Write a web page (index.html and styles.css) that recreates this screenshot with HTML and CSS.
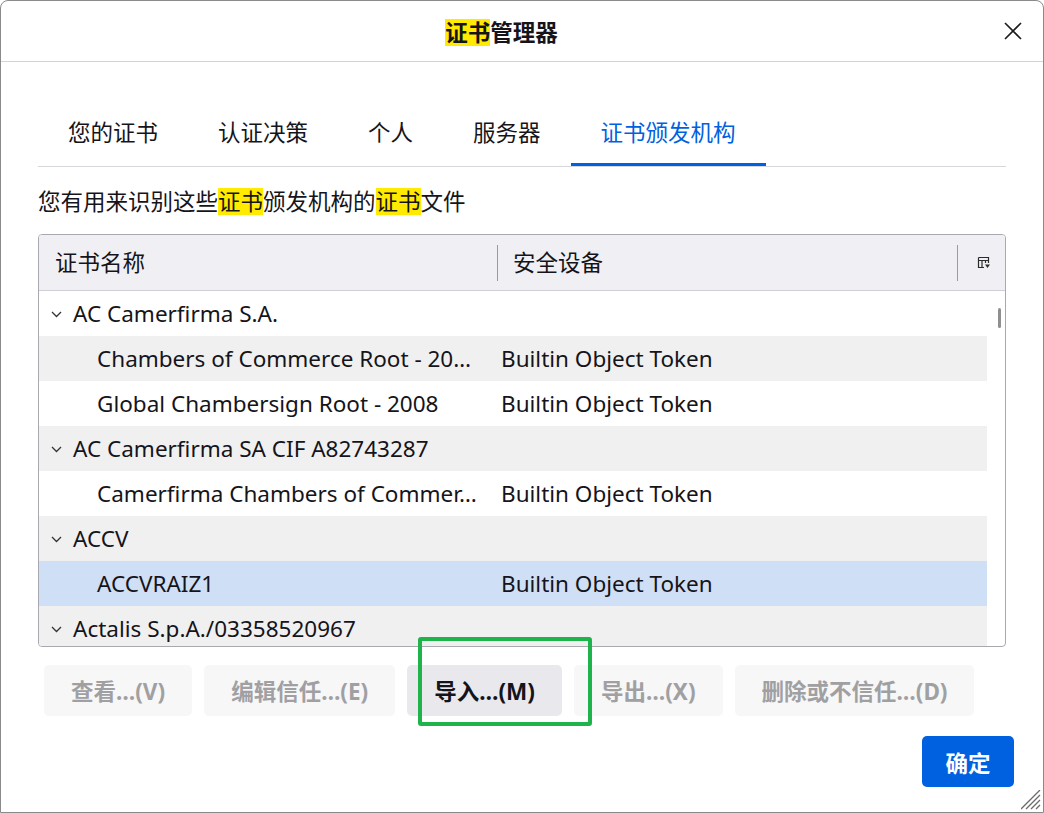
FILE: index.html
```html
<!DOCTYPE html>
<html lang="zh-CN">
<head>
<meta charset="utf-8">
<title>证书管理器</title>
<link rel="stylesheet" href="styles.css">
</head>
<body>
<div class="window">
  <header class="titlebar">
    <h1 class="title"><mark class="hl">证书</mark>管理器</h1>
    <button class="close" aria-label="关闭">
      <svg width="18" height="18" viewBox="0 0 18 18"><path d="M1 1L17 17M17 1L1 17" stroke="#1b1b1b" stroke-width="1.6" fill="none"/></svg>
    </button>
  </header>
  <main class="main">
    <nav class="tabs">
      <span class="tab">您的证书</span>
      <span class="tab">认证决策</span>
      <span class="tab">个人</span>
      <span class="tab">服务器</span>
      <span class="tab active">证书颁发机构</span>
    </nav>
    <p class="desc">您有用来识别这些<mark class="hl">证书</mark>颁发机构的<mark class="hl">证书</mark>文件</p>
    <div class="tree">
      <div class="tree-head">
        <div class="hcell c1">证书名称</div>
        <div class="hsep"></div>
        <div class="hcell c2">安全设备</div>
        <div class="hsep"></div>
        <div class="hcell picker">
          <svg width="13" height="13" viewBox="0 0 13 13"><path d="M1.5 1.5H11.5V7M1.5 1.5V11.5H7M1.5 4.5H11.5M5 4.5V11.5M8.5 4.5V7" stroke="#2b2b2b" stroke-width="1.2" fill="none"/><path d="M8 8.5H13L10.5 12Z" fill="#2b2b2b"/></svg>
        </div>
      </div>
      <div class="tree-body">
        <div class="rows">
          <div class="row group"><span class="name"><svg class="chev" width="11" height="7" viewBox="0 0 11 7"><path d="M1 1L5.5 5.5L10 1" stroke="#333" stroke-width="1.3" fill="none"/></svg>AC Camerfirma S.A.</span><span class="dev"></span></div>
          <div class="row child alt"><span class="name">Chambers of Commerce Root - 20…</span><span class="dev">Builtin Object Token</span></div>
          <div class="row child"><span class="name">Global Chambersign Root - 2008</span><span class="dev">Builtin Object Token</span></div>
          <div class="row group alt"><span class="name"><svg class="chev" width="11" height="7" viewBox="0 0 11 7"><path d="M1 1L5.5 5.5L10 1" stroke="#333" stroke-width="1.3" fill="none"/></svg>AC Camerfirma SA CIF A82743287</span><span class="dev"></span></div>
          <div class="row child"><span class="name">Camerfirma Chambers of Commer…</span><span class="dev">Builtin Object Token</span></div>
          <div class="row group alt"><span class="name"><svg class="chev" width="11" height="7" viewBox="0 0 11 7"><path d="M1 1L5.5 5.5L10 1" stroke="#333" stroke-width="1.3" fill="none"/></svg>ACCV</span><span class="dev"></span></div>
          <div class="row child selected"><span class="name">ACCVRAIZ1</span><span class="dev">Builtin Object Token</span></div>
          <div class="row group alt"><span class="name"><svg class="chev" width="11" height="7" viewBox="0 0 11 7"><path d="M1 1L5.5 5.5L10 1" stroke="#333" stroke-width="1.3" fill="none"/></svg>Actalis S.p.A./03358520967</span><span class="dev"></span></div>
        </div>
        <div class="scrollbar"><div class="thumb"></div></div>
      </div>
    </div>
    <div class="actions">
      <button class="btn" disabled>查看…(V)</button>
      <button class="btn" disabled>编辑信任…(E)</button>
      <button class="btn">导入…(M)</button>
      <button class="btn" disabled>导出…(X)</button>
      <button class="btn" disabled>删除或不信任…(D)</button>
    </div>
    <div class="footer">
      <button class="primary">确定</button>
    </div>
  </main>
  <div class="annot"></div>
  <svg class="grip" width="20" height="20" viewBox="0 0 20 20"><path d="M19 5L5 19M19 10L10 19M19 15L15 19M19 0L0 19" stroke="#6a6a6a" stroke-width="1.3" fill="none"/></svg>
</div>
</body>
</html>
```
FILE: styles.css
```css
* { box-sizing: border-box; }
html, body { margin: 0; padding: 0; background: #fff; }
body {
  font-family: "Noto Sans", "Noto Sans CJK SC", sans-serif;
  color: #15141a;
  font-size: 22.5px;
}
.window {
  position: relative;
  width: 1044px;
  height: 813px;
  border: 1px solid #8a8a8a;
  border-radius: 8px 8px 0 0;
  overflow: hidden;
  background: #fff;
}
.titlebar {
  display: flex;
  align-items: center;
  height: 61px;
  border-bottom: 1px solid #d4d4d4;
}
.title {
  flex: 1;
  margin: 0;
  padding: 3px 0 0 7px;
  text-align: center;
  font-size: 22.5px;
  font-weight: 700;
  line-height: 30px;
}
.hl {
  display: inline-block;
  background: #ffea00;
  color: inherit;
  line-height: 27px;
}
.close {
  width: 36px;
  height: 36px;
  margin-right: 12px;
  border: 0;
  padding: 0;
  background: transparent;
  display: flex;
  align-items: center;
  justify-content: center;
}
.main {
  padding: 0 37px;
}
.tabs {
  display: flex;
  margin-top: 38px;
  border-bottom: 1px solid #d7d7db;
}
.tab {
  padding: 16px 30px 13px;
  line-height: 34px;
  border-bottom: 3px solid transparent;
  white-space: nowrap;
}
.tab.active {
  color: #0061e0;
  border-bottom-color: #0061e0;
}
.desc {
  margin: 18px 0 0;
  line-height: 34px;
}
.tree {
  margin-top: 15px;
  border: 1px solid #a8a8b0;
  border-radius: 4px;
  overflow: hidden;
}
.tree-head {
  display: flex;
  align-items: center;
  height: 56px;
  background: #f0f0f4;
  border-bottom: 1px solid #cfcfd8;
}
.hcell { line-height: 34px; white-space: nowrap; }
.hcell.c1 { width: 458px; padding-left: 16px; }
.hcell.c2 { flex: 1; padding-left: 15px; }
.hcell.picker {
  width: 47px;
  display: flex;
  justify-content: center;
  padding-left: 4px;
}
.hsep {
  width: 1px;
  height: 36px;
  background: #9a9aa4;
}
.tree-body {
  display: flex;
  height: 355px;
  overflow: hidden;
}
.rows { flex: 1; }
.scrollbar {
  width: 18px;
  padding: 17px 0 0 11px;
}
.thumb {
  width: 3px;
  height: 20px;
  border-radius: 2px;
  background: #8f8f8f;
}
.row {
  display: grid;
  grid-template-columns: 459px 1fr;
  height: 45px;
  align-items: center;
  line-height: 30px;
  white-space: nowrap;
}
.row.alt { background: #f0f0f0; }
.row.selected { background: #cfe0f6; }
.name {
  display: flex;
  align-items: center;
  overflow: hidden;
  text-overflow: ellipsis;
  padding-right: 12px;
}
.group .name { padding-left: 12px; }
.child .name { padding-left: 58px; display: block; }
.chev { flex: none; margin-right: 11px; margin-top: 2px; }
.dev { padding-left: 3px; }
.actions {
  display: flex;
  gap: 12px;
  margin: 18px 0 0 6px;
}
.btn {
  height: 51px;
  padding: 0 27px;
  border: 0;
  border-radius: 5px;
  background: #e9e9ed;
  color: #15141a;
  font-family: "Noto Sans", "Noto Sans CJK SC", sans-serif;
  font-size: 22.5px;
  font-weight: 700;
  white-space: nowrap;
}
.btn:disabled {
  background: #f7f7f8;
  color: #a0a0a3;
}
.footer {
  display: flex;
  justify-content: flex-end;
  margin: 20px -8px 0 0;
}
.primary {
  width: 92px;
  height: 51px;
  border: 0;
  border-radius: 5px;
  background: #0061e0;
  color: #fff;
  font-family: "Noto Sans CJK SC", sans-serif;
  font-size: 22.5px;
  font-weight: 700;
}
.annot {
  position: absolute;
  left: 417px;
  top: 636px;
  width: 174px;
  height: 89px;
  border: 4px solid #1fb34b;
  border-radius: 3px;
}
.grip {
  position: absolute;
  right: 2px;
  bottom: 2px;
}
```
